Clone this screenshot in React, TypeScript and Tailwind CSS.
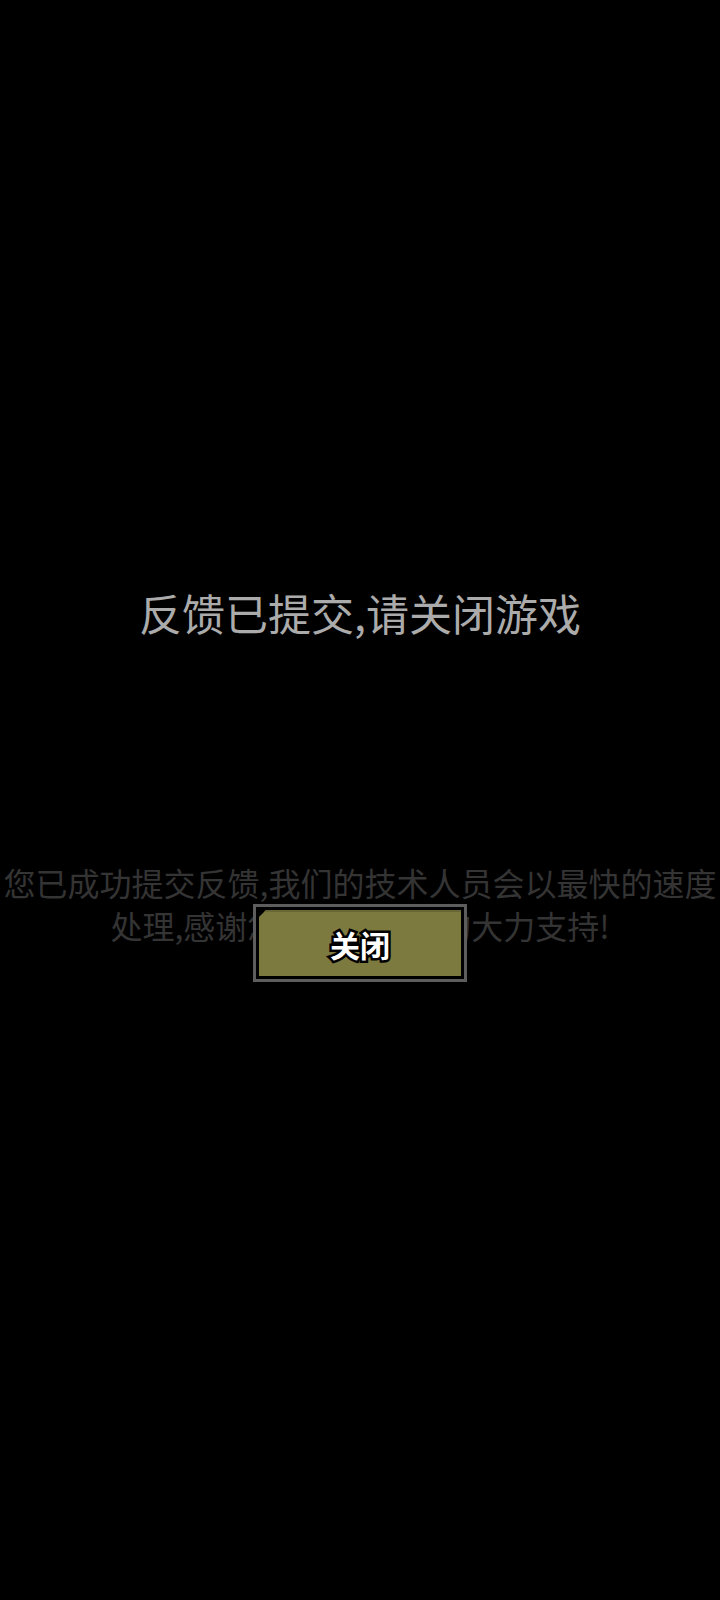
import React from 'react';

const cjk = "font-['Noto_Sans_CJK_SC','Noto_Sans',sans-serif]";

const FeedbackDone = () => {
  return (
    <div className={`min-h-[1600px] w-full bg-black ${cjk}`}>
      <div className="flex flex-col items-center pt-[591px]">
        <h1 className="text-[43px] leading-[43px] font-normal text-[#ababab] whitespace-nowrap">
          反馈已提交,请关闭游戏
        </h1>

        <div className="relative mt-[227px] w-full">
          <p className="text-center text-[32px] leading-[43px] text-[#343434] whitespace-nowrap">
            <span className="block">您已成功提交反馈,我们的技术人员会以最快的速度</span>
            <span className="block">处理,感谢您对我们游戏的大力支持!</span>
          </p>

          {/* close button sits over the message */}
          <button className="absolute left-1/2 top-[43px] -translate-x-1/2 w-[214px] h-[78px] border-[3px] border-[#5d5d5d] bg-black p-[3px]">
            <div className="relative flex h-full w-full items-center justify-center bg-[#7d7a40] [clip-path:polygon(7px_0,100%_0,100%_100%,0_100%,0_7px)]">
              <div className="absolute inset-x-0 top-0 h-[2px] bg-[#6a6736]" />
              <span className="mt-[2px] text-[30px] leading-none font-bold text-white [paint-order:stroke_fill] [-webkit-text-stroke:5px_black]">
                关闭
              </span>
            </div>
          </button>
        </div>
      </div>
    </div>
  );
};

export default function App() {
  return <FeedbackDone />;
}
